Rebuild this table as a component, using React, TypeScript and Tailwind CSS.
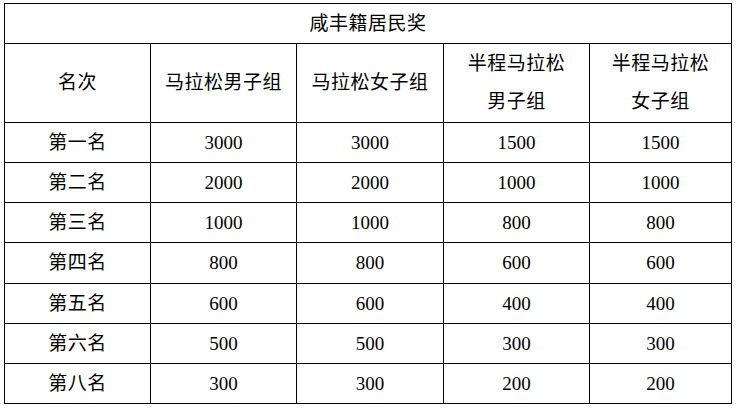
const headers = [
  ["名次"],
  ["马拉松男子组"],
  ["马拉松女子组"],
  ["半程马拉松", "男子组"],
  ["半程马拉松", "女子组"],
];

const rows = [
  ["第一名", "3000", "3000", "1500", "1500"],
  ["第二名", "2000", "2000", "1000", "1000"],
  ["第三名", "1000", "1000", "800", "800"],
  ["第四名", "800", "800", "600", "600"],
  ["第五名", "600", "600", "400", "400"],
  ["第六名", "500", "500", "300", "300"],
  ["第八名", "300", "300", "200", "200"],
];

const widths = ["w-[146px]", "w-[146px]", "w-[147px]", "w-[146px]", "w-[142px]"];

export default function App() {
  return (
    <div className="w-[740px] h-[409px] bg-white pl-[4px] pt-[3px] text-black font-['Liberation_Serif','Noto_Sans_CJK_SC',serif] text-[19px]">
      <table className="border-collapse table-fixed w-[728px]">
        <colgroup>
          {widths.map((w, i) => (
            <col key={i} className={w} />
          ))}
        </colgroup>
        <tbody>
          <tr className="h-[40px]">
            <td colSpan={5} className="border border-black text-center p-0 leading-[38px] tracking-[0.5px]">
              咸丰籍居民奖
            </td>
          </tr>
          <tr className="h-[79px]">
            {headers.map((h, i) => (
              <td key={i} className="border border-black text-center p-0 leading-[38px] tracking-[0.5px]">
                {h.map((line, j) => (
                  <div key={j}>{line}</div>
                ))}
              </td>
            ))}
          </tr>
          {rows.map((r, i) => (
            <tr key={i} className={i === 3 ? "h-[41px]" : "h-[40px]"}>
              {r.map((c, j) => (
                <td key={j} className={`border border-black text-center p-0 leading-[20px] ${j === 0 ? "tracking-[0.5px]" : ""}`}>
                  {c}
                </td>
              ))}
            </tr>
          ))}
        </tbody>
      </table>
    </div>
  );
}
